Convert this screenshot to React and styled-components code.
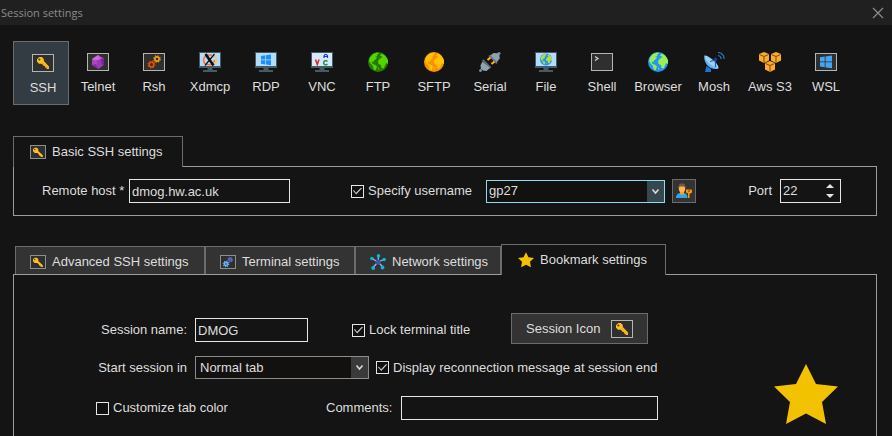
import React, { useState } from "react";
import styled, { createGlobalStyle, css } from "styled-components";

const color = {
  page: "#141414",
  titleBar: "#202020",
  raised: "#333333",
  line: "#9c9c9c",
  dimLine: "#6c6c6c",
  field: "#e6e6e6",
  text: "#dedede",
};

const GlobalStyle = createGlobalStyle`
  *, *::before, *::after { box-sizing: border-box; }
  html { background: ${color.page}; }
  body { margin: 0; overflow: hidden; }
  body, button, input, select {
    font-family: "Liberation Sans", Arial, sans-serif;
    font-size: 13px;
    line-height: 16px;
    color: ${color.text};
  }
  svg { display: block; flex: none; }
`;

/* ---------- layout ---------- */

const Window = styled.main`
  display: flex;
  flex-direction: column;
  min-height: 100vh;
  background: ${color.page};
`;

const TitleBar = styled.header`
  display: flex;
  align-items: center;
  justify-content: space-between;
  height: 25px;
  padding: 0 8px 0 1px;
  background: ${color.titleBar};
`;

const Title = styled.h1`
  margin: 0;
  font: 400 11px/16px "Open Sans", "Noto Sans", sans-serif;
  color: #8c8c8c;
`;

const CloseButton = styled.button`
  display: flex;
  padding: 0;
  border: 0;
  background: none;
`;

const Toolbar = styled.nav`
  display: flex;
  padding: 16px 13px 31px;
`;

const SessionType = styled.button`
  display: flex;
  flex-direction: column;
  align-items: center;
  gap: 7px;
  flex: 0 0 56px;
  height: 64px;
  padding: 10px 0 0 2px;
  border: 1px solid transparent;
  background: none;
  white-space: nowrap;
  ${(p) =>
    p.$active &&
    css`
      padding: 11px 0 0 4px;
      border-color: ${color.dimLine};
      background: #333b43;
    `}
`;

const Section = styled.section`
  display: flex;
  flex-direction: column;
  flex: ${(p) => (p.$fill ? 1 : "none")};
  margin: 0 15px ${(p) => (p.$fill ? 0 : 28)}px 13px;
`;

const TabStrip = styled.div`
  display: flex;
  align-items: flex-end;
  padding-left: ${(p) => (p.$inset ? 2 : 0)}px;
`;

const Tab = styled.button`
  display: flex;
  align-items: center;
  gap: 6px;
  min-width: ${(p) => p.$width}px;
  height: 28px;
  padding: 2px 0 0 14px;
  border: 1px solid ${color.dimLine};
  border-bottom: 0;
  background: ${color.raised};
  white-space: nowrap;
  ${(p) =>
    p.$active &&
    css`
      position: relative;
      height: 31px;
      margin-bottom: -1px;
      padding: 0 0 0 16px;
      background: ${color.page};
    `}
`;

const Panel = styled.div`
  display: flex;
  align-items: center;
  border: 1px solid ${color.line};
`;

const BasicPanel = styled(Panel)`
  height: 50px;
  padding: 0 35px 0 28px;
`;

const BookmarkPanel = styled(Panel)`
  flex: 1;
  align-items: flex-start;
  justify-content: space-between;
  border-bottom: 0;
  padding: 38px 38px 0 82px;
`;

const FormRows = styled.div`
  display: flex;
  flex-direction: column;
  gap: 9px;
`;

const Row = styled.div`
  display: flex;
  align-items: center;
  height: ${(p) => p.$height}px;
`;

const StarSlot = styled.div`
  padding-top: 50px;
`;

/* ---------- controls ---------- */

const Label = styled.label`
  flex: none;
  width: ${(p) => (p.$width ? `${p.$width}px` : "auto")};
  margin-right: ${(p) => p.$gap ?? 8}px;
  text-align: ${(p) => p.$align || "left"};
  white-space: nowrap;
`;

const TextField = styled.input`
  flex: none;
  width: ${(p) => p.$width}px;
  height: 24px;
  padding: 0 2px;
  border: 1px solid ${color.field};
  border-radius: 0;
  background: ${color.page};
  outline: none;
`;

const CheckLabel = styled.label`
  display: flex;
  align-items: center;
  gap: 4px;
  flex: none;
  width: ${(p) => (p.$width ? `${p.$width}px` : "auto")};
  margin-left: ${(p) => p.$before || 0}px;
  white-space: nowrap;
`;

const CheckInput = styled.input`
  appearance: none;
  display: grid;
  place-items: center;
  flex: none;
  width: 13px;
  height: 13px;
  margin: 0;
  border: 1px solid ${color.field};
  background: #101010;
  &:checked::after {
    content: "";
    width: 9px;
    height: 7px;
    background: #c4c4c4;
    clip-path: polygon(0 48%, 9% 36%, 34% 74%, 90% 0, 100% 10%, 36% 100%);
  }
`;

const SelectFrame = styled.span`
  display: grid;
  grid-template-columns: 1fr 17px;
  flex: none;
  width: ${(p) => p.$width}px;
  height: 23px;
  border: 1px solid ${(p) => (p.$focused ? "#8fdcf0" : "#8c8c8c")};
  background: #13110f;
`;

const SelectInput = styled.select`
  appearance: none;
  grid-area: 1 / 1 / 2 / 3;
  width: 100%;
  padding: 0 20px 0 ${(p) => p.$pad}px;
  border: 0;
  background: none;
  outline: none;
`;

const SelectArrow = styled.span`
  grid-area: 1 / 2 / 2 / 3;
  display: grid;
  place-items: center;
  background: ${(p) => (p.$focused ? "#37474f" : "#3a3a3a")};
  pointer-events: none;
`;

const IconButton = styled.button`
  display: grid;
  place-items: center;
  flex: none;
  width: 24px;
  height: 24px;
  margin-left: 7px;
  padding: 0;
  border: 1px solid ${color.dimLine};
  background: ${color.raised};
`;

const PortGroup = styled.div`
  display: flex;
  align-items: center;
  margin-left: auto;
`;

const Spinner = styled.span`
  display: flex;
  width: 61px;
  height: 24px;
  border: 1px solid ${color.field};
`;

const SpinnerInput = styled.input`
  appearance: textfield;
  flex: 1;
  min-width: 0;
  padding: 0 2px;
  border: 0;
  background: none;
  outline: none;
  &::-webkit-inner-spin-button { appearance: none; }
`;

const SpinnerButtons = styled.span`
  display: flex;
  flex-direction: column;
  justify-content: center;
  gap: 6px;
  width: 21px;
`;

const StepButton = styled.button`
  display: grid;
  place-items: center;
  padding: 0;
  border: 0;
  background: none;
`;

const PushButton = styled.button`
  display: flex;
  align-items: center;
  align-self: flex-start;
  justify-content: space-between;
  width: 137px;
  height: 31px;
  margin-left: 39px;
  padding: 0 14px;
  border: 1px solid ${color.dimLine};
  background: ${color.raised};
`;

/* ---------- icons ---------- */

const Frame = ({ children }) => (
  <svg width="22" height="20" viewBox="0 0 22 20" aria-hidden="true">
    <rect x="0.5" y="1.5" width="21" height="17" fill="#2f2f2f" stroke="#b4b4b4" />
    {children}
  </svg>
);

const KeyShape = () => (
  <g>
    <path d="M5 5.2 7.2 3h2.6l2 1.900v2.200l5.200 5.500V15h-2.200l-.6-1.400-1.200-.2-.2-1.500-1.300-.2-1.600-2H7L5 7.800z" fill="#ffc01e" />
    <path d="m10.500 8.200 6 6.300" stroke="#e79a12" strokeWidth="0.8" />
    <circle cx="7.4" cy="5.4" r="1" fill="#3a3322" />
  </g>
);

const KeyFrame = () => (
  <svg width="22" height="18" viewBox="0 0 22 18" aria-hidden="true">
    <rect x="0.5" y="0.5" width="21" height="17" fill="#2f2f2f" stroke="#b4b4b4" />
    <KeyShape />
  </svg>
);

const KeyIcon = () => (
  <Frame>
    <g transform="translate(0 1)">
      <KeyShape />
    </g>
  </Frame>
);

const SmallKeyIcon = () => (
  <svg width="16" height="14" viewBox="0 0 16 14" aria-hidden="true">
    <rect x="0.5" y="0.5" width="15" height="13" fill="#2f2f2f" stroke="#8e8e8e" />
    <path d="M3 4.200 4.500 2.700h2.400l1.400 1.500v1.700l4.500 4.300v1.900h-1.900l-.6-1.300-1.200-.3-.3-1.300-1.500-1.300H4.700L3 6.200z" fill="#ffc01e" />
    <circle cx="4.8" cy="4.5" r="0.7" fill="#3a3322" />
  </svg>
);

const GemIcon = () => (
  <Frame>
    <path d="m11 3 6 3.500v6L11.500 17 5 13V7z" fill="#ab47bc" />
    <path d="m11 3-6 4 4.500 1.500L14 7z" fill="#ce6bdc" />
    <path d="m14 7 3-.5v6l-2.500.5z" fill="#7b1fa2" />
    <path d="m9.500 8.500 4.500-1.500.5 6-3 4z" fill="#9c38b0" />
    <path d="m5 13 4-1 2.500 5z" fill="#8e24aa" />
  </Frame>
);

const Gear = ({ cx, cy, r, fill }) => (
  <g fill="none" stroke={fill}>
    <circle cx={cx} cy={cy} r={r} strokeWidth="1.6" />
    <circle cx={cx} cy={cy} r={r + 1.1} strokeWidth="1.2" strokeDasharray={`${(r + 1.1) * 0.39} ${(r + 1.1) * 0.395}`} />
  </g>
);

const GearsIcon = () => (
  <Frame>
    <Gear cx={14} cy={7} r={2.1} fill="#fb9a10" />
    <Gear cx={8.5} cy={12.5} r={2.3} fill="#e65100" />
  </Frame>
);

const SmallGearsIcon = () => (
  <svg width="16" height="14" viewBox="0 0 16 14" aria-hidden="true">
    <rect x="0.5" y="0.5" width="15" height="13" fill="#2f2f2f" stroke="#8e8e8e" />
    <Gear cx={10.2} cy={4.7} r={1.3} fill="#5c6bc0" />
    <Gear cx={6} cy={9} r={1.6} fill="#64b5f6" />
  </svg>
);

const Monitor = ({ screen = "#b3dcfa", children }) => (
  <svg width="22" height="20" viewBox="0 0 22 20" aria-hidden="true">
    <path d="M0 0h22v16H0z" fill="#455a64" />
    <path d="M1 1h20v13H1z" fill={screen} />
    <path d="M8.500 16h5v2H18v2H4v-2h4.500z" fill="#465a64" />
    {children}
  </svg>
);

const XIcon = () => (
  <Monitor>
    <path d="M13 3.200C8 2 4.500 4.500 4.500 8s3 5 6.500 4.700c3-.3 4.500-2 4.500-4.700" fill="none" stroke="#ff6a35" strokeWidth="1.500" />
    <path d="M14.500 3.500c4 2 4.300 6.500-1 9" fill="none" stroke="#ffc16b" strokeWidth="1.600" />
    <path d="m6.500 2 8 11.500" stroke="#111" strokeWidth="2.600" />
    <path d="M15.500 2 6 13.500" stroke="#111" strokeWidth="1.200" />
  </Monitor>
);

const RdpIcon = () => (
  <Monitor>
    <path d="m6 4 4.300-.7v4.200H6zM11 3.200 16 2.500v5h-5zM6 8.200h4.300v4.200L6 11.800zM11 8.200h5v5l-5-.7z" fill="#1e90f5" />
  </Monitor>
);

const VncIcon = () => (
  <Monitor screen="#d4e9fb">
    <g fill="none" strokeWidth="1.500">
      <path d="m4.500 7.500 1.800 5 1.700-5" stroke="#ee1c1c" />
      <path d="M13 6V4l1-1.500h1.500L16.500 4v2M13 4.500h3.500" stroke="#2431dd" strokeWidth="1.200" />
      <path d="M16.500 9.500 15.500 8.800h-1.700l-1 1v2l1 1h1.700l1-.8" stroke="#16a03a" />
    </g>
  </Monitor>
);

const GlobeShape = ({ sea, land }) => (
  <g>
    <circle cx="11" cy="10" r="10" fill={sea} />
    <path d="M3 5.500 6 2l4-1.500 2 .8-2 1.500.5 1.200-2.500 1 2 .5L9 7 7 8.500 6.500 10l-2-.5 1 2.500 2.500.8 2 1.700-1.500 4-2-1.500-.5-3-2-2L2 9z" fill={land} />
    <path d="m13 3.500 2-2 3.500 2.500L21 8v4l-2-1-1 2.500-1.500 3-2-.5-.5-3-2.500-1-.5-3 2-2.500L15.500 5z" fill={land} />
    <path d="m11 15.500 1.200 1-1 1.200z" fill={land} />
  </g>
);

const Globe = (props) => (
  <svg width="22" height="20" viewBox="0 0 22 20" aria-hidden="true">
    <GlobeShape {...props} />
  </svg>
);

const PlugIcon = () => (
  <svg width="22" height="20" viewBox="0 0 22 20" aria-hidden="true">
    <path d="m19 2.500 2-2" stroke="#78909c" strokeWidth="2.600" />
    <path d="m10.500 4 4-3 4 .2 1.800 1.500.4 3.500-3.500 5z" fill="#8fa3ae" />
    <path d="m9.500 4 1.500-1 7.500 7.500-1.200 1.500z" fill="#5d727d" />
    <path d="m8.500 8 3-2.500M12.500 12l3-2.500" stroke="#ffb300" strokeWidth="2.200" />
    <path d="m3 8.500 1.300-1.200 8 8-1.400 1.200z" fill="#5d727d" />
    <path d="M3.500 9.500 11 16l-3.500 3-3.500-.5-2-2-.5-3z" fill="#8fa3ae" />
    <path d="m2.500 17.500-2 2" stroke="#78909c" strokeWidth="2.600" />
  </svg>
);

const FileIcon = () => (
  <Monitor>
    <g transform="translate(4.400 1.500) scale(.6)">
      <GlobeShape sea="#2196f3" land="#b9dc3c" />
    </g>
  </Monitor>
);

const ShellIcon = () => (
  <Frame>
    <path d="m4 4.500 3 2-3 2" fill="none" stroke="#d5d5d5" strokeWidth="1.200" />
  </Frame>
);

const DishIcon = () => (
  <svg width="22" height="20" viewBox="0 0 22 20" aria-hidden="true">
    <path d="m2 20 1.500-6 4.500 3v3z" fill="#1976d2" />
    <path d="M1.500 3.500C0 9 5 18 14.500 17c1-.2 1.500-1 .5-2z" fill="#64b5f6" />
    <path d="M1.500 3.500C5 3 15 11 15.500 15.500 11 17 2 9 1.500 3.500z" fill="#9ed0f8" />
    <path d="M12.500 8 7 9.500M12.500 8v7" stroke="#1d5da8" strokeWidth="1.200" />
    <path d="m10.500 7 2-1.800 2 2-1.800 2z" fill="#0d47a1" />
    <path d="M15 3.500c2 .2 3 1.500 3.200 3.500M15 .5c4.500.5 6 3 6.200 6.500" fill="none" stroke="#2e7cc7" strokeWidth="1.200" />
  </svg>
);

const Cube = ({ x, y }) => (
  <g transform={`translate(${x} ${y})`}>
    <path d="M0 2 5 0l5 2v6.500L5 11 0 8.500z" fill="#fbab2f" />
    <path d="m.5 2.500 4.500 2 4.500-2M5 4.500V10.500" fill="none" stroke="#6b410b" strokeWidth="0.900" />
  </g>
);

const AwsIcon = () => (
  <svg width="22" height="20" viewBox="0 0 22 20" aria-hidden="true">
    <Cube x={0} y={0} />
    <Cube x={12} y={0} />
    <Cube x={6} y={9} />
  </svg>
);

const WslIcon = () => (
  <Frame>
    <path d="m5 5.300 4.700-.8v5H5zM10.500 4.400 17 3.500v6h-6.500zM5 10.300h4.700v5L5 14.600zM10.500 10.300H17v6l-6.500-.9z" fill="#42a5f5" />
  </Frame>
);

const StarIcon = ({ size }) => (
  <svg width={size} height={size} viewBox="0 0 64 64" aria-hidden="true">
    <path d="m32 1 10 20 22 2.500L48 39l4 22-20-10.500L12 61l4-22L0 23.500 22 21z" fill="#f2c100" />
  </svg>
);

const NetworkIcon = () => (
  <svg width="16" height="16" viewBox="0 0 16 16" aria-hidden="true">
    <path d="M8 8 8.500 2M8 8l6-2.500M8 8l5 5M8 8l-5 5.500M8 8 2 4.500" stroke="#a9b6e2" strokeWidth="1.300" />
    <g fill="#00bcd4">
      <circle cx="8.500" cy="1.900" r="1.800" />
      <circle cx="14.100" cy="5.500" r="1.800" />
      <circle cx="12.500" cy="13.500" r="1.900" />
      <circle cx="3.200" cy="14" r="1.900" />
      <circle cx="1.900" cy="4.500" r="1.800" />
    </g>
    <circle cx="8" cy="8" r="2.600" fill="#3f51b5" />
  </svg>
);

const UserKeyIcon = () => (
  <svg width="16" height="16" viewBox="0 0 16 16" aria-hidden="true">
    <path d="M0 15c0-3 1.500-4.500 4-5h4c2.500.5 3.500 2 3.500 5z" fill="#29a9ea" />
    <path d="M4 8.500h4V11l-2 1.500L4 11z" fill="#f29a2e" />
    <ellipse cx="6" cy="5.500" rx="3.200" ry="4" fill="#ffb74d" />
    <path d="M2.500 6C2 2 3.500.5 6 .5S10 2 9.500 6C9 3.500 8 3.200 6 3.500 4 3.200 3 3.500 2.500 6z" fill="#795548" />
    <path d="M10 6.500h5.500l.5 1v2l-1.500 1H13.500V15H12v-4.500L10 9.500z" fill="#ff9800" />
    <path d="M12 8h2" stroke="#5b3a08" />
  </svg>
);

const CloseIcon = () => (
  <svg width="12" height="12" viewBox="0 0 12 12" aria-hidden="true">
    <path d="m1 1 10 10M11 1 1 11" stroke="#8f8f8f" strokeWidth="1.100" />
  </svg>
);

const Chevron = () => (
  <svg width="9" height="7" viewBox="0 0 9 7" aria-hidden="true">
    <path d="m1.500 1.500 3 3.500 3-3.500" fill="none" stroke="#dcdcdc" strokeWidth="1.500" />
  </svg>
);

const Triangle = ({ down }) => (
  <svg width="8" height="4" viewBox="0 0 8 4" aria-hidden="true">
    <path d={down ? "M0 0h8L4 4z" : "M0 4h8L4 0z"} fill="#e4e4e4" />
  </svg>
);

/* ---------- composed controls ---------- */

const Check = ({ label, checked, ...rest }) => (
  <CheckLabel {...rest}>
    <CheckInput type="checkbox" defaultChecked={checked} />
    {label}
  </CheckLabel>
);

const Select = ({ id, width, focused, pad = 4, value, ...rest }) => (
  <SelectFrame $width={width} $focused={focused}>
    <SelectInput id={id} $pad={pad} defaultValue={value} {...rest}>
      <option>{value}</option>
    </SelectInput>
    <SelectArrow $focused={focused}>
      <Chevron />
    </SelectArrow>
  </SelectFrame>
);

const sessionTypes = [
  ["SSH", <KeyIcon />],
  ["Telnet", <GemIcon />],
  ["Rsh", <GearsIcon />],
  ["Xdmcp", <XIcon />],
  ["RDP", <RdpIcon />],
  ["VNC", <VncIcon />],
  ["FTP", <Globe sea="#267a00" land="#55d400" />],
  ["SFTP", <Globe sea="#ff8f00" land="#ffc400" />],
  ["Serial", <PlugIcon />],
  ["File", <FileIcon />],
  ["Shell", <ShellIcon />],
  ["Browser", <Globe sea="#2196f3" land="#9cee52" />],
  ["Mosh", <DishIcon />],
  ["Aws S3", <AwsIcon />],
  ["WSL", <WslIcon />],
];

const settingsTabs = [
  ["Advanced SSH settings", <SmallKeyIcon />, 190],
  ["Terminal settings", <SmallGearsIcon />, 150],
  ["Network settings", <NetworkIcon />, 146],
  ["Bookmark settings", <StarIcon size={16} />, 165],
];

export default function App() {
  const [session, setSession] = useState("SSH");
  const [port, setPort] = useState(22);

  return (
    <Window>
      <GlobalStyle />
      <TitleBar>
        <Title>Session settings</Title>
        <CloseButton aria-label="Close">
          <CloseIcon />
        </CloseButton>
      </TitleBar>

      <Toolbar aria-label="Session type">
        {sessionTypes.map(([name, icon]) => (
          <SessionType key={name} $active={name === session} onClick={() => setSession(name)}>
            {icon}
            {name}
          </SessionType>
        ))}
      </Toolbar>

      <Section>
        <TabStrip role="tablist">
          <Tab role="tab" aria-selected="true" $active $width={170}>
            <SmallKeyIcon />
            Basic SSH settings
          </Tab>
        </TabStrip>
        <BasicPanel>
          <Label htmlFor="host" $width={84} $gap={3}>Remote host *</Label>
          <TextField id="host" $width={161} defaultValue="dmog.hw.ac.uk" />
          <Check label="Specify username" checked $before={61} $width={135} />
          <Select width={179} focused pad={2} value="gp27" aria-label="Username" />
          <IconButton aria-label="Manage credentials">
            <UserKeyIcon />
          </IconButton>
          <PortGroup>
            <Label htmlFor="port">Port</Label>
            <Spinner>
              <SpinnerInput id="port" type="number" value={port} onChange={(e) => setPort(Number(e.target.value))} />
              <SpinnerButtons>
                <StepButton aria-label="Increase port" onClick={() => setPort(port + 1)}>
                  <Triangle />
                </StepButton>
                <StepButton aria-label="Decrease port" onClick={() => setPort(port - 1)}>
                  <Triangle down />
                </StepButton>
              </SpinnerButtons>
            </Spinner>
          </PortGroup>
        </BasicPanel>
      </Section>

      <Section $fill>
        <TabStrip role="tablist" $inset>
          {settingsTabs.map(([name, icon, width]) => {
            const active = name === "Bookmark settings";
            return (
              <Tab key={name} role="tab" aria-selected={active} $active={active} $width={width}>
                {icon}
                {name}
              </Tab>
            );
          })}
        </TabStrip>
        <BookmarkPanel>
          <FormRows>
            <Row $height={34}>
              <Label htmlFor="name" $width={91} $align="right">Session name:</Label>
              <TextField id="name" $width={113} defaultValue="DMOG" />
              <Check label="Lock terminal title" checked $before={44} $width={120} />
              <PushButton>
                Session Icon
                <KeyFrame />
              </PushButton>
            </Row>
            <Row $height={23}>
              <Label htmlFor="start" $width={91} $align="right">Start session in</Label>
              <Select id="start" width={174} value="Normal tab" />
              <Check label="Display reconnection message at session end" checked $before={7} />
            </Row>
            <Row $height={40}>
              <Check label="Customize tab color" $width={230} />
              <Label htmlFor="comments" $width={67}>Comments:</Label>
              <TextField id="comments" $width={257} />
            </Row>
          </FormRows>
          <StarSlot>
            <StarIcon size={64} />
          </StarSlot>
        </BookmarkPanel>
      </Section>
    </Window>
  );
}
